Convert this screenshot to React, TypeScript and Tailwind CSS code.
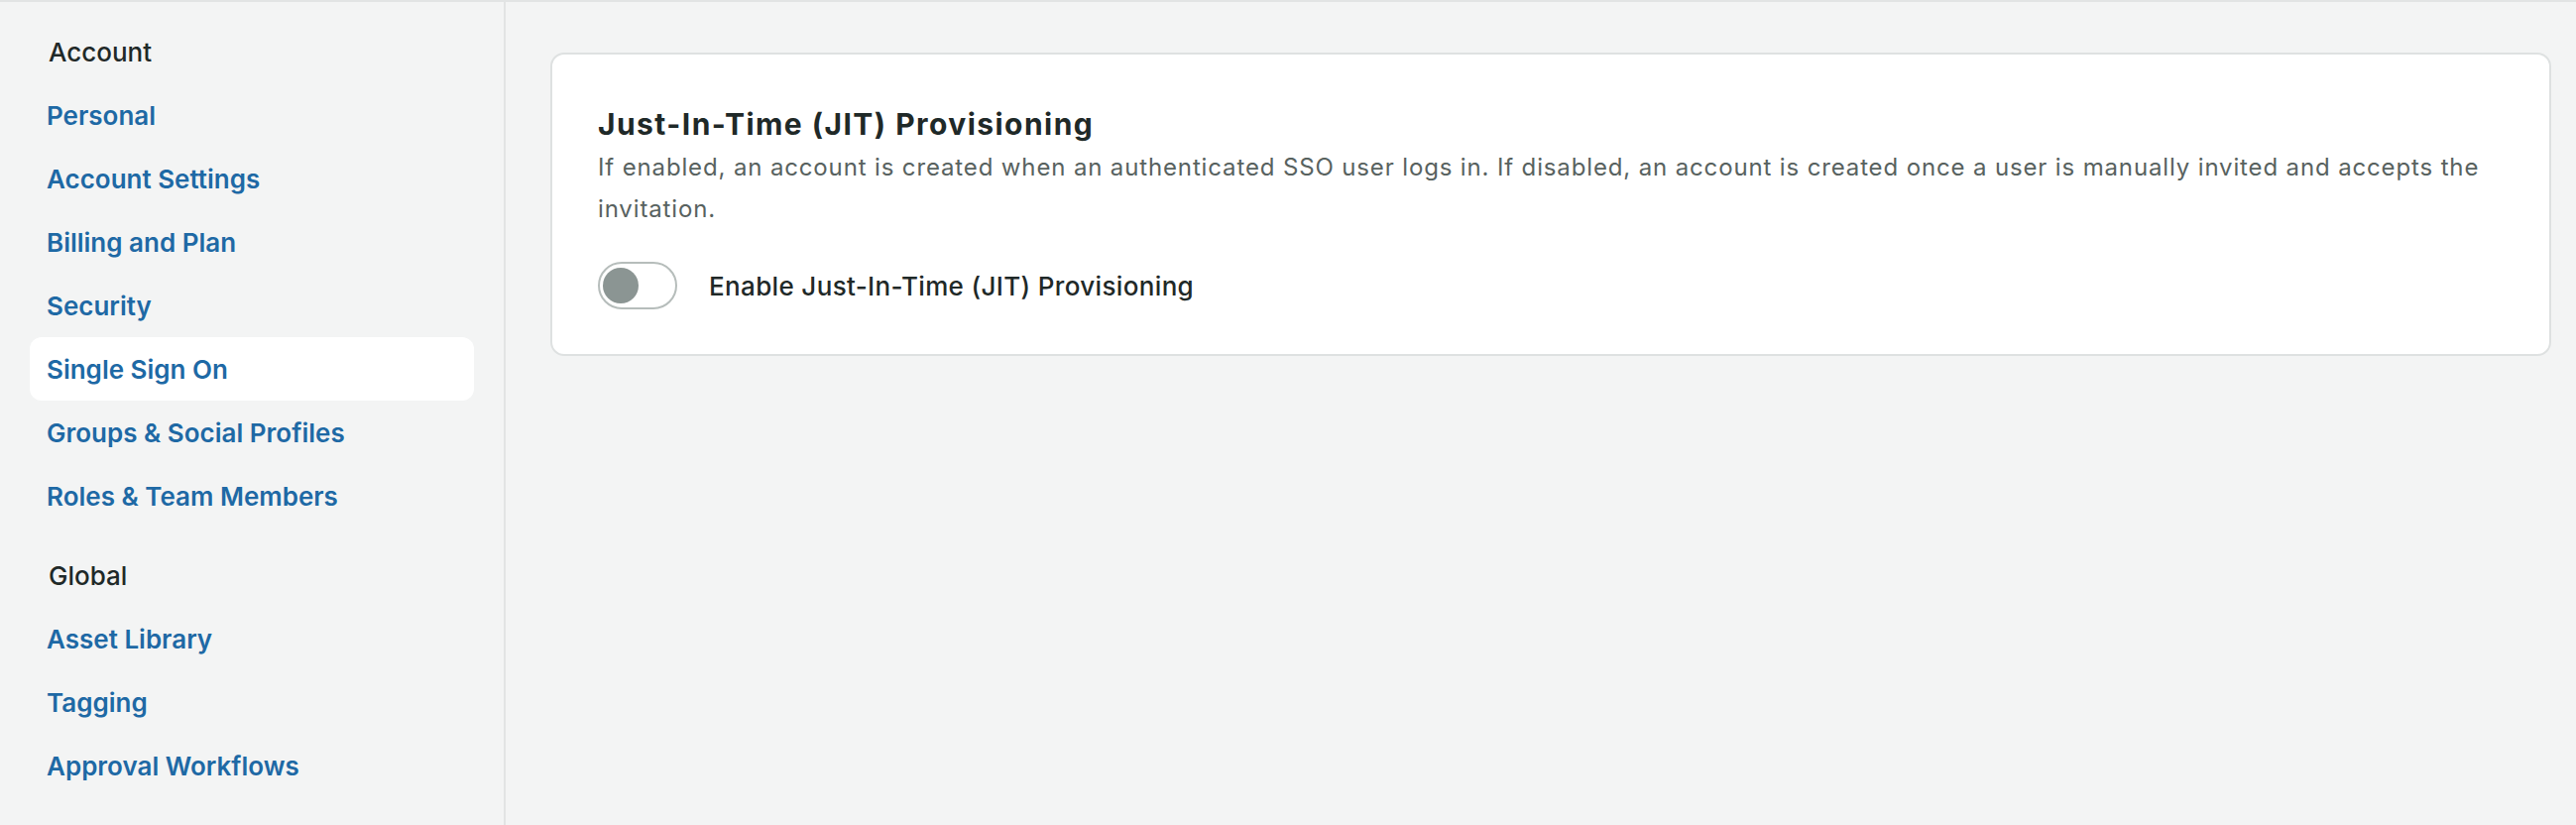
import React from "react";

const accountItems = [
  "Personal",
  "Account Settings",
  "Billing and Plan",
  "Security",
  "Single Sign On",
  "Groups & Social Profiles",
  "Roles & Team Members",
];
const globalItems = ["Asset Library", "Tagging", "Approval Workflows"];

function NavItem({ label, active }: { label: string; active?: boolean }) {
  return (
    <div
      className={
        "h-[64px] flex items-center pl-[17px] rounded-[12px] text-[26px] font-semibold text-[#1e69a5] " +
        (active ? "bg-white" : "")
      }
    >
      {label}
    </div>
  );
}

function Header({ label }: { label: string }) {
  return (
    <div className="h-[64px] flex items-center pl-[19px] text-[26px] font-medium text-[#1f2928]">
      {label}
    </div>
  );
}

export default function App() {
  return (
    <div
      className="w-[2598px] h-[832px] flex bg-[#f3f4f4] border-t-2 border-[#e2e4e4] overflow-hidden"
      style={{ fontFamily: "Inter, 'Noto Sans', sans-serif" }}
    >
      <aside className="w-[510px] shrink-0 border-r-2 border-[#e2e4e4] px-[30px] pt-[18px]">
        <Header label="Account" />
        {accountItems.map((l) => (
          <NavItem key={l} label={l} active={l === "Single Sign On"} />
        ))}
        <div className="h-[16px]" />
        <Header label="Global" />
        {globalItems.map((l) => (
          <NavItem key={l} label={l} />
        ))}
      </aside>
      <main className="flex-1 pl-[45px] pr-[25px] pt-[51px]">
        <section className="bg-white border-2 border-[#dee1e1] rounded-[14px] pl-[46px] pr-[46px] pt-[52px] pb-[45px]">
          <h2 className="text-[30px] leading-[36px] font-bold tracking-[1.45px] text-[#1f2928]">
            Just-In-Time (JIT) Provisioning
          </h2>
          <p className="mt-[5px] text-[24px] leading-[42px] tracking-[0.86px] text-[#58625f]">
            If enabled, an account is created when an authenticated SSO user logs in. If disabled, an account is created once a user is manually invited and accepts the invitation.
          </p>
          <div className="mt-[32px] flex items-center gap-[32px]">
            <div className="w-[80px] h-[48px] rounded-full border-2 border-[#b6bdbb] bg-white flex items-center pl-[3px]">
              <div className="w-[36px] h-[36px] rounded-full bg-[#8b9593]" />
            </div>
            <span className="text-[26px] font-medium tracking-[0.35px] text-[#1f2928]">
              Enable Just-In-Time (JIT) Provisioning
            </span>
          </div>
        </section>
      </main>
    </div>
  );
}
